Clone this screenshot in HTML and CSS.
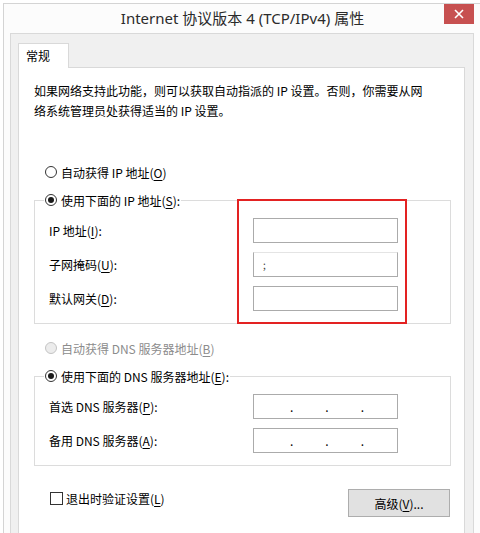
FILE: index.html
```html
<!DOCTYPE html>
<html lang="zh-CN">
<head>
  <meta charset="UTF-8">
  <meta name="viewport" content="width=device-width, initial-scale=1.0">
  <title>Internet 协议版本 4 (TCP/IPv4) 属性</title>
  <link rel="stylesheet" href="styles.css">
</head>
<body>

  <div class="window">
    <div class="titlebar">
      <div class="title">Internet 协议版本 4 (TCP/IPv4) 属性</div>
      <div class="close-btn">
        <svg width="10" height="10" viewBox="0 0 10 10">
          <path d="M1 1 L9 9 M9 1 L1 9" stroke="#fff" stroke-width="1.6" fill="none"/>
        </svg>
      </div>
    </div>

    <div class="client">
      <div class="tab">常规</div>

      <div class="tab-panel">
        <p class="intro">如果网络支持此功能，则可以获取自动指派的 IP 设置。否则，你需要从网<br>络系统管理员处获得适当的 IP 设置。</p>

        <!-- IP address -->
        <label class="option first"><span class="radio"></span>自动获得 IP 地址(<u>O</u>)</label>
        <div class="group-wrap">
          <fieldset class="group">
            <legend><span class="option"><span class="radio checked"></span>使用下面的 IP 地址(<u>S</u>):</span></legend>
            <div class="rows">
              <span class="field-label">IP 地址(<u>I</u>):</span>
              <div class="ip-box"></div>
              <span class="field-label">子网掩码(<u>U</u>):</span>
              <div class="ip-box erased"><span class="stray">;</span></div>
              <span class="field-label">默认网关(<u>D</u>):</span>
              <div class="ip-box"></div>
            </div>
          </fieldset>
          <div class="mark"></div>
        </div>

        <!-- DNS -->
        <label class="option disabled"><span class="radio"></span>自动获得 DNS 服务器地址(<u>B</u>)</label>
        <div class="group-wrap">
          <fieldset class="group">
            <legend><span class="option"><span class="radio checked"></span>使用下面的 DNS 服务器地址(<u>E</u>):</span></legend>
            <div class="rows">
              <span class="field-label">首选 DNS 服务器(<u>P</u>):</span>
              <div class="ip-box dotted"><span>.</span><span>.</span><span>.</span></div>
              <span class="field-label">备用 DNS 服务器(<u>A</u>):</span>
              <div class="ip-box dotted"><span>.</span><span>.</span><span>.</span></div>
            </div>
          </fieldset>
        </div>

        <div class="footer">
          <label class="check-option"><span class="checkbox"></span>退出时验证设置(<u>L</u>)</label>
          <button class="btn">高级(<u>V</u>)...</button>
        </div>
      </div>
    </div>
  </div>

</body>
</html>
```

FILE: styles.css
```css
body {
  margin: 0;
  height: 533px;
  overflow: hidden;
  background-color: #fff;
  font-family: "Noto Sans CJK SC", "Noto Sans", sans-serif;
  font-size: 12px;
  color: #000;
}
u {
  text-underline-offset: 2px;
}
.window {
  margin: 3px 0 0 3px;
  width: 464px;
  padding: 0 6px;
  border: 1px solid #d4d4d4;
  background-color: #fcfcfc;
}
.titlebar {
  display: flex;
  align-items: flex-start;
  height: 29px;
}
.title {
  flex: 1;
  padding-left: 31px;
  text-align: center;
  font-family: "Noto Sans", "Noto Sans CJK SC", sans-serif;
  font-size: 15px;
  line-height: 29px;
  color: #2b2b2b;
}
.close-btn {
  width: 30px;
  height: 20px;
  display: flex;
  align-items: center;
  justify-content: center;
  background-color: #c75050;
}
.client {
  height: 560px;
  padding: 9px 8px 0 7px;
  background-color: #f0f0f0;
  border: 1px solid #d9d9d9;
}
.tab {
  position: relative;
  z-index: 1;
  width: 42px;
  height: 24px;
  padding-left: 7px;
  margin-bottom: -1px;
  line-height: 24px;
  background-color: #fff;
  border: 1px solid #d9d9d9;
  border-bottom: none;
}
.tab-panel {
  height: 520px;
  padding: 13px 13px 0 15px;
  background-color: #fff;
  border: 1px solid #d9d9d9;
}
.intro {
  margin: 0;
  line-height: 20px;
}
.option {
  display: flex;
  align-items: center;
  height: 20px;
  margin-left: 11px;
}
.option.first {
  margin-top: 41px;
}
.option.disabled {
  margin-top: 14px;
  color: #8c8c8c;
}
legend .option {
  margin-left: 0;
}
.radio {
  width: 10px;
  height: 10px;
  margin-right: 4px;
  border: 1px solid #333;
  border-radius: 50%;
  background-color: #fff;
  display: flex;
  align-items: center;
  justify-content: center;
}
.radio.checked::after {
  content: "";
  width: 6px;
  height: 6px;
  border-radius: 50%;
  background-color: #1a1a1a;
}
.disabled .radio {
  border-color: #c4c4c4;
  background-color: #ececec;
}
.group-wrap {
  position: relative;
  margin-top: 8px;
}
.group {
  margin: 0;
  min-width: 0;
  padding: 0 0 12px;
  border: 1px solid #dcdcdc;
}
.group legend {
  margin-left: 9px;
  padding: 0 1px;
  height: 20px;
}
.rows {
  display: grid;
  grid-template-columns: 204px 145px;
  grid-auto-rows: 25px;
  row-gap: 9px;
  padding: 8px 0 0 14px;
  align-items: center;
}
.ip-box {
  height: 23px;
  border: 1px solid #ababab;
  background-color: #fff;
  display: flex;
  align-items: center;
}
.ip-box.erased {
  border-top-color: #e4e4e4;
}
.stray {
  margin-left: 9px;
  font-size: 10px;
  color: #444;
}
.ip-box.dotted {
  padding-left: 36px;
  gap: 32px;
  line-height: 23px;
}
.mark {
  position: absolute;
  top: 9px;
  left: 203px;
  width: 170px;
  height: 125px;
  box-sizing: border-box;
  border: 2px solid #e32222;
}
.footer {
  display: flex;
  justify-content: space-between;
  align-items: flex-start;
  margin-top: 22px;
  padding-left: 16px;
}
.check-option {
  display: flex;
  align-items: center;
  height: 20px;
}
.checkbox {
  width: 11px;
  height: 11px;
  margin-right: 3px;
  border: 1px solid #333;
  background-color: #fff;
}
.btn {
  width: 102px;
  height: 28px;
  margin: 1px 1px 0 0;
  padding: 0;
  font-family: inherit;
  font-size: 12px;
  color: #000;
  background-color: #e1e1e1;
  border: 1px solid #adadad;
}
```
